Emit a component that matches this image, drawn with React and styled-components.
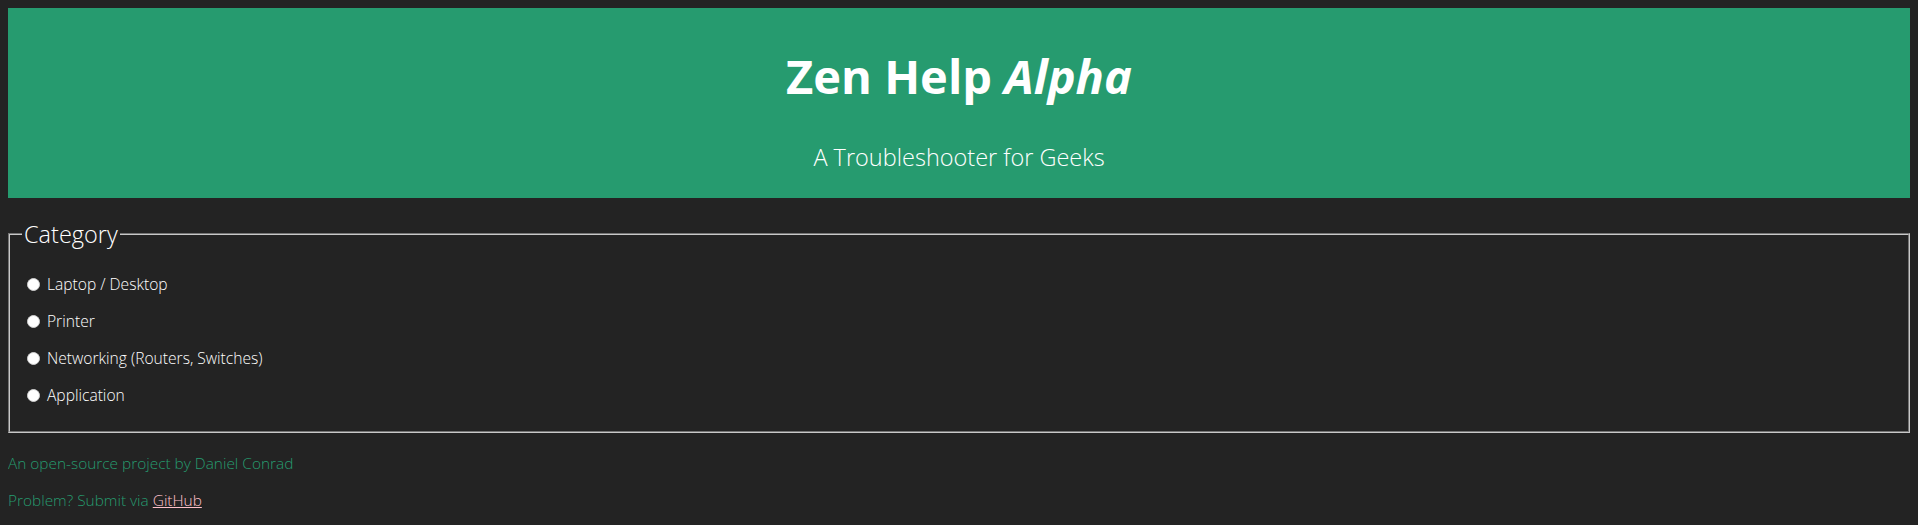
import React from "react";
import styled, { createGlobalStyle } from "styled-components";

const GlobalStyle = createGlobalStyle`
  html, body {
    background: #232323;
  }
  body {
    margin: 8px;
    color: #ffffff;
    font-family: "Open Sans", "Noto Sans", "Liberation Sans", sans-serif;
    font-weight: 300;
    font-size: 16px;
  }
`;

const Header = styled.header`
  background: #269b6f;
  text-align: center;
  padding: 44px 0 29px;
`;

const Title = styled.h1`
  margin: 0;
  font-size: 47px;
  line-height: 48px;
  font-weight: 700;
  color: #ffffff;

  em {
    font-style: italic;
  }
`;

const Subtitle = styled.p`
  margin: 45px 0 0;
  font-size: 23.5px;
  line-height: 24px;
  font-weight: 300;
  color: #ffffff;
`;

const Fieldset = styled.fieldset`
  margin: 22px 0 0;
  padding: 9.5px 12px 9px;
  border: 2px groove #c8c8c8;
`;

const Legend = styled.legend`
  padding: 0 2px;
  font-size: 23.5px;
  line-height: 28px;
  font-weight: 300;
`;

const Option = styled.p`
  margin: 16px 0;
  font-size: 15.6px;
  line-height: 21px;
  display: flex;
  align-items: center;
`;

const Radio = styled.input.attrs({ type: "radio" })`
  appearance: none;
  width: 13px;
  height: 13px;
  margin: 0 7px 0 5px;
  border-radius: 50%;
  background: #ffffff;
  border: 1px solid #d0d0d0;
  box-sizing: border-box;
`;

const Footer = styled.footer`
  padding-top: 4px;
`;

const FooterLine = styled.p`
  margin: 16px 0;
  font-size: 15.4px;
  line-height: 21px;
  color: #269b6f;
`;

const Link = styled.a`
  color: #ffc0cb;
  text-decoration: underline;
`;

const categories = [
  "Laptop / Desktop",
  "Printer",
  "Networking (Routers, Switches)",
  "Application",
];

export default function App() {
  return (
    <>
      <GlobalStyle />
      <Header>
        <Title>
          Zen Help <em>Alpha</em>
        </Title>
        <Subtitle>A Troubleshooter for Geeks</Subtitle>
      </Header>
      <Fieldset>
        <Legend>Category</Legend>
        {categories.map((c) => (
          <Option key={c}>
            <Radio name="category" id={c} />
            <label htmlFor={c}>{c}</label>
          </Option>
        ))}
      </Fieldset>
      <Footer>
        <FooterLine>An open-source project by Daniel Conrad</FooterLine>
        <FooterLine>
          Problem? Submit via <Link href="#">GitHub</Link>
        </FooterLine>
      </Footer>
    </>
  );
}
